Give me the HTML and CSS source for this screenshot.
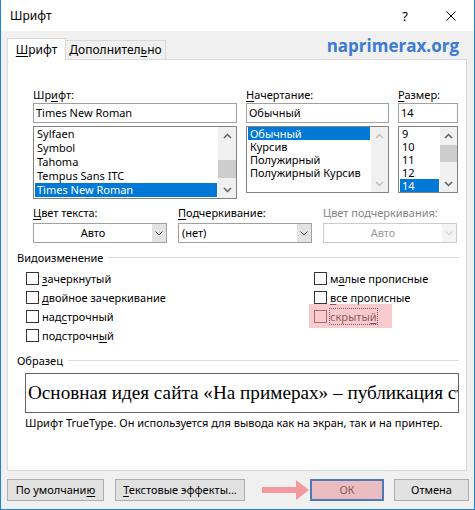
FILE: index.html
```html
<!DOCTYPE html>
<html lang="ru">
<head>
	<meta charset="UTF-8">
	<title>Шрифт</title>
	<link rel="stylesheet" href="styles.css">
</head>
<body>
<div class="dialog">

	<div class="titlebar">
		<span class="title">Шрифт</span>
		<span class="tbtn">?</span>
		<span class="tbtn">
			<svg width="10" height="10" viewBox="0 0 10 10"><path d="M0.5 0.5L9.5 9.5M9.5 0.5L0.5 9.5" stroke="#000" stroke-width="1" fill="none"/></svg>
		</span>
	</div>

	<div class="tabstrip">
		<div class="tab active"><u>Ш</u>рифт</div>
		<div class="tab">Дополнител<u>ь</u>но</div>
		<div class="site">naprimerax.org</div>
	</div>

	<div class="panel">

		<div class="fonts">
			<div class="field">
				<div class="lbl">Шр<u>и</u>фт:</div>
				<div class="edit">Times New Roman</div>
				<div class="list tall">
					<div class="items">
						<div class="item">Sylfaen</div>
						<div class="item">Symbol</div>
						<div class="item">Tahoma</div>
						<div class="item">Tempus Sans ITC</div>
						<div class="item sel">Times New Roman</div>
					</div>
					<div class="scroll wide">
						<div class="sarrow"><svg width="9" height="6" viewBox="0 0 9 6"><path d="M1 5L4.5 1.5L8 5" /></svg></div>
						<div class="track"><div class="thumb font"></div></div>
						<div class="sarrow"><svg width="9" height="6" viewBox="0 0 9 6"><path d="M1 1L4.5 4.5L8 1" /></svg></div>
					</div>
				</div>
			</div>

			<div class="field">
				<div class="lbl"><u>Н</u>ачертание:</div>
				<div class="edit">Обычный</div>
				<div class="list">
					<div class="items">
						<div class="item sel">Обычный</div>
						<div class="item">Курсив</div>
						<div class="item">Полужирный</div>
						<div class="item">Полужирный Курсив</div>
					</div>
					<div class="scroll off">
						<div class="sarrow"><svg width="9" height="6" viewBox="0 0 9 6"><path d="M1 5L4.5 1.5L8 5" /></svg></div>
						<div class="track"></div>
						<div class="sarrow"><svg width="9" height="6" viewBox="0 0 9 6"><path d="M1 1L4.5 4.5L8 1" /></svg></div>
					</div>
				</div>
			</div>

			<div class="field">
				<div class="lbl"><u>Р</u>азмер:</div>
				<div class="edit">14</div>
				<div class="list">
					<div class="items">
						<div class="item">9</div>
						<div class="item">10</div>
						<div class="item">11</div>
						<div class="item">12</div>
						<div class="item sel">14</div>
					</div>
					<div class="scroll">
						<div class="sarrow"><svg width="9" height="6" viewBox="0 0 9 6"><path d="M1 5L4.5 1.5L8 5" /></svg></div>
						<div class="track"><div class="thumb size"></div></div>
						<div class="sarrow"><svg width="9" height="6" viewBox="0 0 9 6"><path d="M1 1L4.5 4.5L8 1" /></svg></div>
					</div>
				</div>
			</div>
		</div>

		<div class="colors">
			<div class="field">
				<div class="lbl"><u>Ц</u>вет текста:</div>
				<div class="combo">
					<div class="val center">Авто</div>
					<div class="drop"><svg width="8" height="5" viewBox="0 0 8 5"><path d="M0.5 0.5L4 4L7.5 0.5" /></svg></div>
				</div>
			</div>
			<div class="field">
				<div class="lbl"><u>П</u>одчеркивание:</div>
				<div class="combo">
					<div class="val">(нет)</div>
					<div class="drop"><svg width="8" height="5" viewBox="0 0 8 5"><path d="M0.5 0.5L4 4L7.5 0.5" /></svg></div>
				</div>
			</div>
			<div class="field">
				<div class="lbl off">Цвет подчеркивания:</div>
				<div class="combo off">
					<div class="val center">Авто</div>
					<div class="drop"><svg width="8" height="5" viewBox="0 0 8 5"><path d="M0.5 0.5L4 4L7.5 0.5" /></svg></div>
				</div>
			</div>
		</div>

		<div class="group">Видоизменение</div>
		<div class="checks">
			<div class="col">
				<div class="check"><i class="box"></i><span><u>з</u>ачеркнутый</span></div>
				<div class="check"><i class="box"></i><span><u>д</u>войное зачеркивание</span></div>
				<div class="check"><i class="box"></i><span>над<u>с</u>трочный</span></div>
				<div class="check"><i class="box"></i><span>подстрочн<u>ы</u>й</span></div>
			</div>
			<div class="col">
				<div class="check"><i class="box"></i><span>м<u>а</u>лые прописные</span></div>
				<div class="check"><i class="box"></i><span><u>в</u>се прописные</span></div>
				<div class="check"><i class="box"></i><span class="focus">скрыты<u>й</u></span><div class="mark"></div></div>
			</div>
		</div>

		<div class="group">Образец</div>
		<div class="sample">Основная идея сайта «На примерах» – публикация статей</div>
		<div class="note">Шрифт TrueType. Он используется для вывода как на экран, так и на принтер.</div>
	</div>

	<div class="buttons">
		<div class="btn defaults">По умолчани<u>ю</u></div>
		<div class="btn effects"><u>Т</u>екстовые эффекты...</div>
		<svg class="arrow" width="47" height="20" viewBox="0 0 47 20"><path d="M0 7H34V0L47 10L34 20V13H0Z" fill="#f4999d"/></svg>
		<div class="btn ok">ОК<div class="mark"></div></div>
		<div class="btn cancel">Отмена</div>
	</div>

</div>
</body>
</html>
```

FILE: styles.css
```css
body {
	margin:0;
	font-family:"Noto Sans", sans-serif;
	font-size:11px;
	color:#000;
}
u {
	text-decoration-thickness:1px;
	text-underline-offset:2px;
}

.dialog {
	width:475px;
	height:510px;
	box-sizing:border-box;
	border:1px solid #1883d7;
	border-top:none;
	background:#f0f0f0;
	display:flex;
	flex-direction:column;
}

/* barre de titre */
.titlebar {
	height:31px;
	flex:none;
	background:#fff;
	display:flex;
	align-items:center;
	font-size:12px;
}
.title {
	flex:1;
	padding-left:9px;
}
.tbtn {
	width:46px;
	height:31px;
	display:flex;
	align-items:center;
	justify-content:center;
	font-size:13px;
}

/* onglets */
.tabstrip {
	height:28px;
	flex:none;
	display:flex;
	align-items:flex-end;
	padding:0 15px 0 6px;
}
.tab {
	width:101px;
	height:19px;
	box-sizing:border-box;
	border:1px solid #d9d9d9;
	border-bottom:none;
	margin-left:-1px;
	text-align:center;
	line-height:18px;
	font-size:12px;
}
.tab.active {
	width:59px;
	height:22px;
	margin-left:0;
	margin-bottom:-1px;
	background:#fff;
	line-height:21px;
	position:relative;
	z-index:1;
}
.site {
	margin-left:auto;
	align-self:center;
	font-family:"Open Sans", sans-serif;
	font-weight:700;
	font-size:17px;
	color:#3b7bd4;
}

.panel {
	height:412px;
	flex:none;
	box-sizing:border-box;
	margin:0 7px 0 6px;
	border:1px solid #d9d9d9;
	background:#fff;
	padding:27px 7px 0 9px;
}

.fonts {
	display:grid;
	grid-template-columns:204px 143px 60px;
	column-gap:9px;
	margin-left:16px;
}
.lbl {
	height:16px;
	line-height:16px;
	white-space:nowrap;
}
.lbl.off {
	color:#838383;
}
.edit {
	height:20px;
	box-sizing:border-box;
	border:1px solid #a0a0a0;
	padding:0 2px;
	line-height:18px;
}

/* listes */
.list {
	margin-top:3px;
	height:67px;
	box-sizing:border-box;
	border:1px solid #828282;
	display:flex;
}
.list.tall {
	height:73px;
}
.items {
	flex:1;
	overflow:hidden;
}
.item {
	height:13px;
	line-height:13px;
	margin:0 1px;
	padding-left:2px;
	white-space:nowrap;
}
.tall .item {
	height:14px;
	line-height:14px;
}
.item.sel {
	background:#0078d7;
	color:#fff;
}
.scroll {
	width:17px;
	background:#f0f0f0;
	display:flex;
	flex-direction:column;
}
.scroll.wide {
	width:18px;
}
.sarrow {
	height:17px;
	display:flex;
	align-items:center;
	justify-content:center;
}
.sarrow path {
	fill:none;
	stroke:#606060;
	stroke-width:1.5;
}
.scroll.off .sarrow path {
	stroke:#c0c0c0;
}
.track {
	flex:1;
}
.thumb {
	background:#cdcdcd;
}
.thumb.font {
	margin-top:16px;
	height:18px;
}
.thumb.size {
	margin-top:1px;
	height:17px;
}

/* listes deroulantes */
.colors {
	display:grid;
	grid-template-columns:repeat(3, 134px);
	column-gap:11px;
	margin:6px 0 0 16px;
}
.combo {
	margin-top:2px;
	height:20px;
	box-sizing:border-box;
	border:1px solid #a0a0a0;
	display:flex;
}
.combo .val {
	flex:1;
	padding-left:3px;
	line-height:18px;
}
.combo .val.center {
	text-align:center;
	padding-left:0;
}
.drop {
	width:14px;
	background:#e3e3e3;
	display:flex;
	align-items:center;
	justify-content:center;
}
.drop path {
	fill:none;
	stroke:#555;
	stroke-width:1;
}
.combo.off {
	border-color:#cccccc;
	color:#9a9a9a;
}
.combo.off .drop {
	background:#f4f4f4;
}
.combo.off .drop path {
	stroke:#c4c4c4;
}

/* groupes */
.group {
	display:flex;
	align-items:center;
	height:15px;
	line-height:15px;
	margin-top:7px;
}
.group::after {
	content:"";
	flex:1;
	height:1px;
	background:#dcdcdc;
	margin-left:5px;
}
.checks {
	display:grid;
	grid-template-columns:288px auto;
	margin:4px 0 0 9px;
}
.check {
	height:19px;
	display:flex;
	align-items:center;
	position:relative;
}
.box {
	width:13px;
	height:13px;
	box-sizing:border-box;
	border:1px solid #333;
	background:#fff;
	flex:none;
}
.check span {
	margin-left:2px;
	border:1px solid transparent;
	line-height:15px;
	white-space:nowrap;
}
.check span.focus {
	border:1px dotted #000;
}
.mark {
	position:absolute;
	background:rgba(244, 160, 166, 0.55);
}
.check .mark {
	left:-5px;
	top:-3px;
	bottom:-2px;
	width:83px;
}

.group + .sample {
	margin-top:5px;
}
.checks + .group {
	margin-top:8px;
}
.sample {
	margin-left:8px;
	height:40px;
	box-sizing:border-box;
	border:1px solid #646464;
	padding-left:2px;
	font-family:"Liberation Serif", serif;
	font-size:19.2px;
	line-height:38px;
	white-space:nowrap;
	overflow:hidden;
}
.note {
	margin:2px 0 0 8px;
	line-height:16px;
	white-space:nowrap;
}

/* boutons */
.buttons {
	flex:1;
	display:flex;
	align-items:center;
	padding:0 5px 0 6px;
}
.btn {
	height:22px;
	box-sizing:border-box;
	border:1px solid #adadad;
	background:#e1e1e1;
	text-align:center;
	line-height:20px;
	position:relative;
}
.btn.defaults {
	width:97px;
}
.btn.effects {
	width:130px;
	margin-left:11px;
}
.arrow {
	margin-left:auto;
	margin-right:1px;
}
.btn.ok {
	width:74px;
	border:2px solid #4f7ab8;
	line-height:18px;
}
.btn.ok .mark {
	left:0; right:0; top:0; bottom:0;
}
.btn.cancel {
	width:75px;
	margin-left:10px;
}
```
